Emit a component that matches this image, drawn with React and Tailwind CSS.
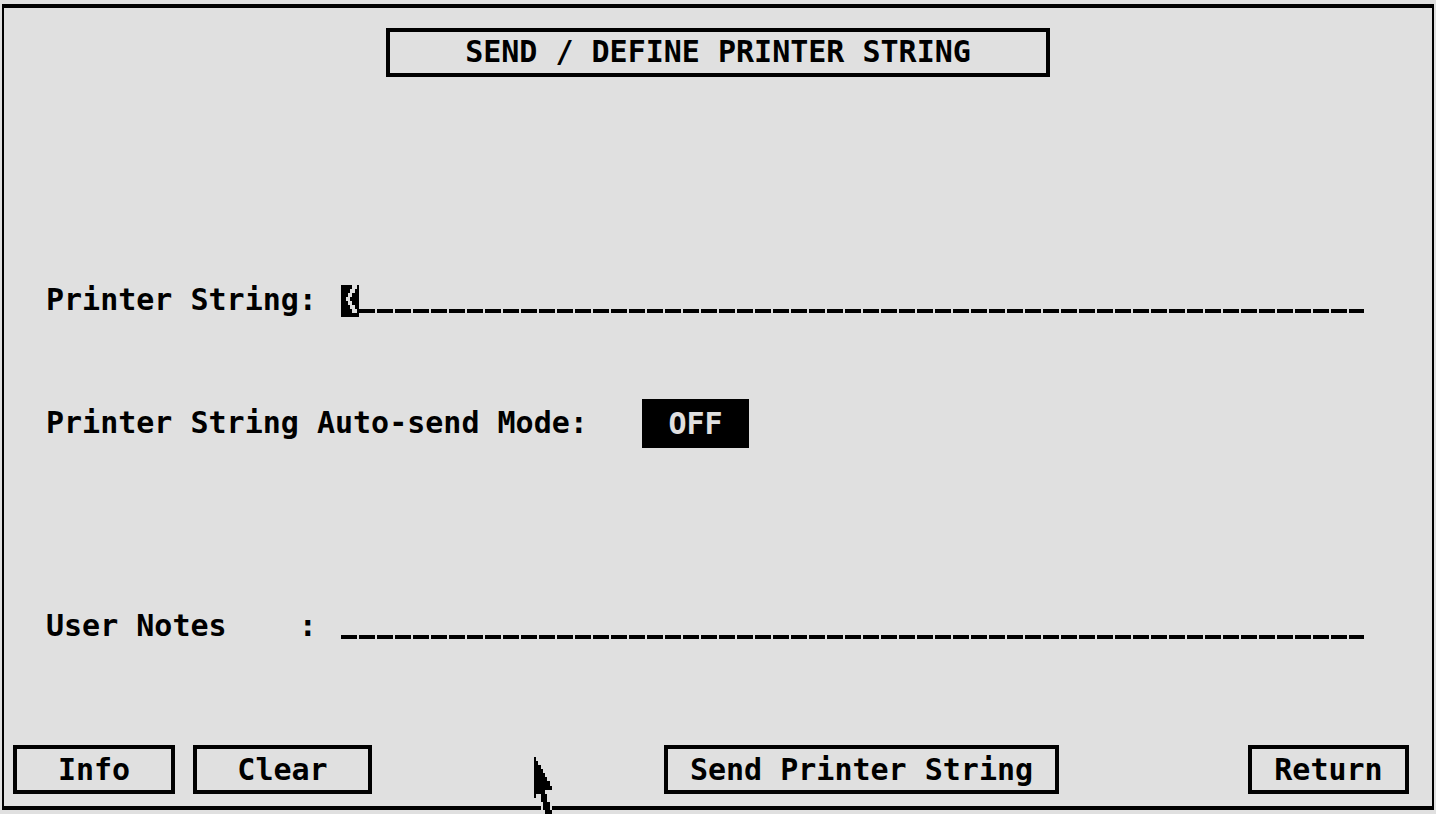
import React, { useState } from "react";

const buttonClass =
    "h-[49px] border-4 border-black text-center leading-10 whitespace-nowrap focus:outline-none active:bg-black active:text-[#e0e0e0]";

// One dash per character slot
const fieldClass =
    "block h-12 w-full bg-transparent bg-[linear-gradient(90deg,#000_16px,transparent_16px)] bg-[length:18px_4px] bg-[position:0_33px] bg-repeat-x focus:outline-none";

const BlockCursor = () => (
    <svg
        className="absolute top-[9px] left-0 h-8 w-[18px]"
        viewBox="0 0 18 32"
        shapeRendering="crispEdges"
        aria-hidden="true"
    >
        <path d="M0 0h18v32H0z" fill="#000" />
        <path
            d="M11 0h5v4h-2v4h-3v4H9v4h2v4h3v4h2v4h-5v-4H9v-4H7v-4H5v-4h2V8h2V4h2z"
            fill="#e0e0e0"
        />
    </svg>
);

const Pointer = () => (
    <svg
        className="pointer-events-none absolute top-3 left-[162px] h-[57px] w-[18px]"
        viewBox="0 0 18 57"
        shapeRendering="crispEdges"
        aria-hidden="true"
    >
        <path d="M7 49h11v4H7z" fill="#e0e0e0" />
        <path
            d="M0 0h2v4h2v4h3v4h2v4h2v4h2v4h3v5h2v4h-7v4h2v8h3v8h2v4h-7v-4H9v-8H7v-8H2v4H0z"
            fill="#000"
        />
    </svg>
);

const App = () => {
    const [form, setForm] = useState({ printerString: "", notes: "" });
    const [autoSend, setAutoSend] = useState(false);

    const handleChange = (e) =>
        setForm({ ...form, [e.target.name]: e.target.value });

    const handleClear = () => setForm({ printerString: "", notes: "" });

    return (
        <div className="min-h-screen overflow-hidden bg-[#e0e0e0] px-0.5 py-1 font-['DejaVu_Sans_Mono',monospace] text-[30px] font-bold text-black">
            <main className="flex min-h-[calc(100vh-8px)] flex-col border-x-2 border-y-4 border-black pt-5 pb-3">
                <h1 className="mx-auto h-[49px] w-[664px] border-4 border-black text-center leading-10">
                    SEND / DEFINE PRINTER STRING
                </h1>

                <form
                    onSubmit={(e) => e.preventDefault()}
                    className="mt-[199px] flex flex-col pr-[68px] pl-[42px] leading-[48px]"
                >
                    <div className="flex">
                        <label htmlFor="printerString" className="w-[295px] shrink-0">
                            Printer String:
                        </label>
                        <div className="relative min-w-0 flex-1">
                            <input
                                id="printerString"
                                type="text"
                                name="printerString"
                                value={form.printerString}
                                onChange={handleChange}
                                className={fieldClass}
                            />
                            {form.printerString === "" && <BlockCursor />}
                        </div>
                    </div>

                    <div className="mt-[75px] flex">
                        <label htmlFor="autoSend" className="w-[596px] shrink-0">
                            Printer String Auto-send Mode:
                        </label>
                        <button
                            id="autoSend"
                            type="button"
                            onClick={() => setAutoSend(!autoSend)}
                            className="h-[49px] w-[107px] bg-black text-center text-[#e0e0e0] focus:outline-none"
                        >
                            {autoSend ? "ON" : "OFF"}
                        </button>
                    </div>

                    <div className="mt-[154px] flex">
                        <label htmlFor="notes" className="w-[295px] shrink-0 whitespace-pre">
                            {"User Notes    :"}
                        </label>
                        <div className="min-w-0 flex-1">
                            <input
                                id="notes"
                                type="text"
                                name="notes"
                                value={form.notes}
                                onChange={handleChange}
                                className={fieldClass}
                            />
                        </div>
                    </div>
                </form>

                <div className="mt-auto flex pr-[23px] pl-[9px]">
                    <div className="flex gap-[18px]">
                        <button type="button" className={`${buttonClass} w-[162px]`}>
                            Info
                        </button>
                        <button
                            type="button"
                            onClick={handleClear}
                            className={`${buttonClass} w-[179px]`}
                        >
                            Clear
                        </button>
                    </div>
                    <div className="relative grow-292">
                        <Pointer />
                    </div>
                    <button type="button" className={`${buttonClass} w-[395px]`}>
                        Send Printer String
                    </button>
                    <div className="grow-189" />
                    <button type="button" className={`${buttonClass} w-[161px]`}>
                        Return
                    </button>
                </div>
            </main>
        </div>
    );
};

export default App;
